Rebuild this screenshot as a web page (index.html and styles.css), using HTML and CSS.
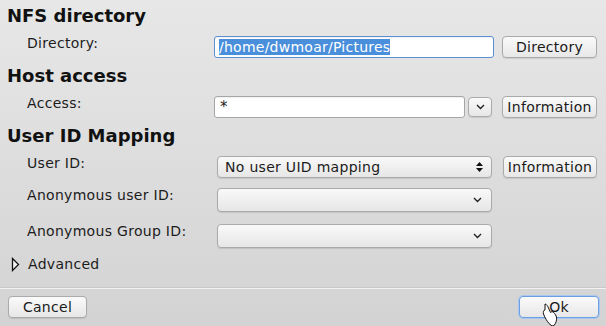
FILE: index.html
```html
<!DOCTYPE html>
<html>
<head>
<meta charset="utf-8">
<link rel="stylesheet" href="styles.css">
</head>
<body>
<div class="dialog">
  <div class="content">
    <section class="group">
      <h2 class="heading">NFS directory</h2>
      <div class="row">
        <span class="label">Directory:</span>
        <div class="controls">
          <div class="input input-dir focused"><span class="sel">/home/dwmoar/Pictures</span></div>
          <button class="btn btn-side">Directory</button>
        </div>
      </div>
    </section>

    <section class="group">
      <h2 class="heading">Host access</h2>
      <div class="row">
        <span class="label">Access:</span>
        <div class="controls">
          <div class="input input-access"><span class="txt">*</span></div>
          <button class="btn drop-btn" aria-label="more">
            <svg width="9" height="6" viewBox="0 0 9 6"><path d="M1 1 L4.5 4.5 L8 1" fill="none" stroke="#222" stroke-width="1.4"/></svg>
          </button>
          <button class="btn btn-side btn-info-1">Information</button>
        </div>
      </div>
    </section>

    <section class="group">
      <h2 class="heading">User ID Mapping</h2>
      <div class="row">
        <span class="label">User ID:</span>
        <div class="controls">
          <div class="combo combo-uid">
            <span class="combo-text">No user UID mapping</span>
            <svg class="spin" width="7" height="12" viewBox="0 0 7 12"><path d="M0 5 L3.5 1 L7 5 Z M0 7 L3.5 11 L7 7 Z" fill="#111"/></svg>
          </div>
          <button class="btn btn-side btn-info-2">Information</button>
        </div>
      </div>
      <div class="row row-anon">
        <span class="label">Anonymous user ID:</span>
        <div class="controls">
          <div class="combo combo-empty">
            <svg class="chev" width="9" height="6" viewBox="0 0 9 6"><path d="M1 1 L4.5 4.5 L8 1" fill="none" stroke="#222" stroke-width="1.4"/></svg>
          </div>
        </div>
      </div>
      <div class="row row-anon2">
        <span class="label">Anonymous Group ID:</span>
        <div class="controls">
          <div class="combo combo-empty">
            <svg class="chev" width="9" height="6" viewBox="0 0 9 6"><path d="M1 1 L4.5 4.5 L8 1" fill="none" stroke="#222" stroke-width="1.4"/></svg>
          </div>
        </div>
      </div>
    </section>

    <div class="advanced">
      <svg class="expander" width="9" height="15" viewBox="0 0 9 15"><path d="M1.5 1.5 L7.5 7.5 L1.5 13.5 Z" fill="#f4f4f4" stroke="#111" stroke-width="1.3" stroke-linejoin="miter"/></svg>
      <span>Advanced</span>
    </div>
  </div>

  <div class="footer">
    <button class="btn btn-foot">Cancel</button>
    <button class="btn btn-foot btn-ok">Ok</button>
  </div>

  <svg class="cursor" width="16" height="24" viewBox="0 0 16 24">
    <path d="M3 1 C4.5 1 5.5 3 6.5 5 L8.5 9.5 L10 8.5 C11.5 9 13.5 11 14.5 14 C15 17 14 20 12 22.5 L10 23 L7 20.5 C5 18 3 15 1.5 11 C1 9 1.5 7 3 7 Z" fill="#fff" stroke="#111" stroke-width="1"/>
  </svg>
</div>
</body>
</html>
```

FILE: styles.css
```css
* { box-sizing: border-box; }

html, body {
  margin: 0;
  padding: 0;
  width: 606px;
  height: 326px;
  overflow: hidden;
}

body {
  font-family: "DejaVu Sans", sans-serif;
  font-size: 14px;
  color: #1c1c1c;
  background: linear-gradient(#e7e7e7, #d3d3d3);
}

.dialog {
  position: relative;
  height: 326px;
  display: flex;
  flex-direction: column;
}

.content {
  padding: 6px 7px 0 7px;
}

.group {
  margin-bottom: 8px;
}

.heading {
  margin: 0 0 10px 0;
  font-size: 18px;
  line-height: 20px;
  font-weight: bold;
  color: #111;
}

.row {
  display: grid;
  grid-template-columns: 187px auto;
  padding-left: 20px;
}

.row-anon { margin-top: 10px; }
.row-anon2 { margin-top: 12px; }

.label {
  line-height: 13px;
  padding-top: 1px;
  letter-spacing: 0.3px;
}

.controls {
  display: flex;
  align-items: center;
}

.input {
  height: 22px;
  background: #fff;
  border: 1px solid #a6a6a6;
  border-radius: 3px;
  display: flex;
  align-items: center;
  padding-left: 4px;
  box-shadow: inset 0 1px 1px rgba(0,0,0,0.06);
}

.input.focused {
  border-color: #5b8fd3;
}

.input-dir { width: 280px; }
.input-access { width: 251px; }

.sel {
  background: #4a8fdb;
  color: #fff;
  line-height: 16px;
  letter-spacing: 0.25px;
}

.txt {
  font-size: 15px;
  padding-left: 1px;
}

.btn {
  font-family: "DejaVu Sans", sans-serif;
  font-size: 14px;
  color: #1a1a1a;
  height: 22px;
  padding: 0;
  border: 1px solid #aaaaaa;
  border-radius: 4px;
  background: linear-gradient(#fafafa, #e7e7e7);
  box-shadow: 0 1px 1px rgba(0,0,0,0.10);
  letter-spacing: 0.3px;
  display: flex;
  align-items: center;
  justify-content: center;
}

.btn-side {
  width: 95px;
  margin-left: 8px;
}

.drop-btn {
  width: 24px;
  height: 20px;
  margin-left: 3px;
}

.btn-info-1 { margin-left: 10px; }

.btn-info-2 {
  width: 94px;
  margin-left: 11px;
}

.combo {
  margin-left: 3px;
  width: 275px;
  border: 1px solid #aaaaaa;
  border-radius: 4px;
  background: linear-gradient(#f9f9f9, #e6e6e6);
  box-shadow: 0 1px 1px rgba(0,0,0,0.10);
  display: flex;
  align-items: center;
  justify-content: space-between;
  padding: 0 8px 0 7px;
}

.combo-uid { height: 22px; }
.combo-empty {
  height: 24px;
  justify-content: flex-end;
  padding-right: 9px;
}

.combo-text { letter-spacing: 0.3px; }

.advanced {
  margin-top: 7px;
  display: flex;
  align-items: center;
  padding-left: 4px;
  line-height: 16px;
  letter-spacing: 0.3px;
}

.expander { margin-right: 8px; }

.footer {
  margin-top: auto;
  border-top: 1px solid #c9c9c9;
  box-shadow: inset 0 1px 0 #f2f2f2;
  display: flex;
  justify-content: space-between;
  padding: 8px 7px 8px 8px;
}

.btn-foot { width: 79px; }

.btn-ok {
  width: 80px;
  border-color: #6c9fe2;
  box-shadow: 0 0 0 1px #a9c7ef;
}

.cursor {
  position: absolute;
  left: 542px;
  top: 303px;
}
```
